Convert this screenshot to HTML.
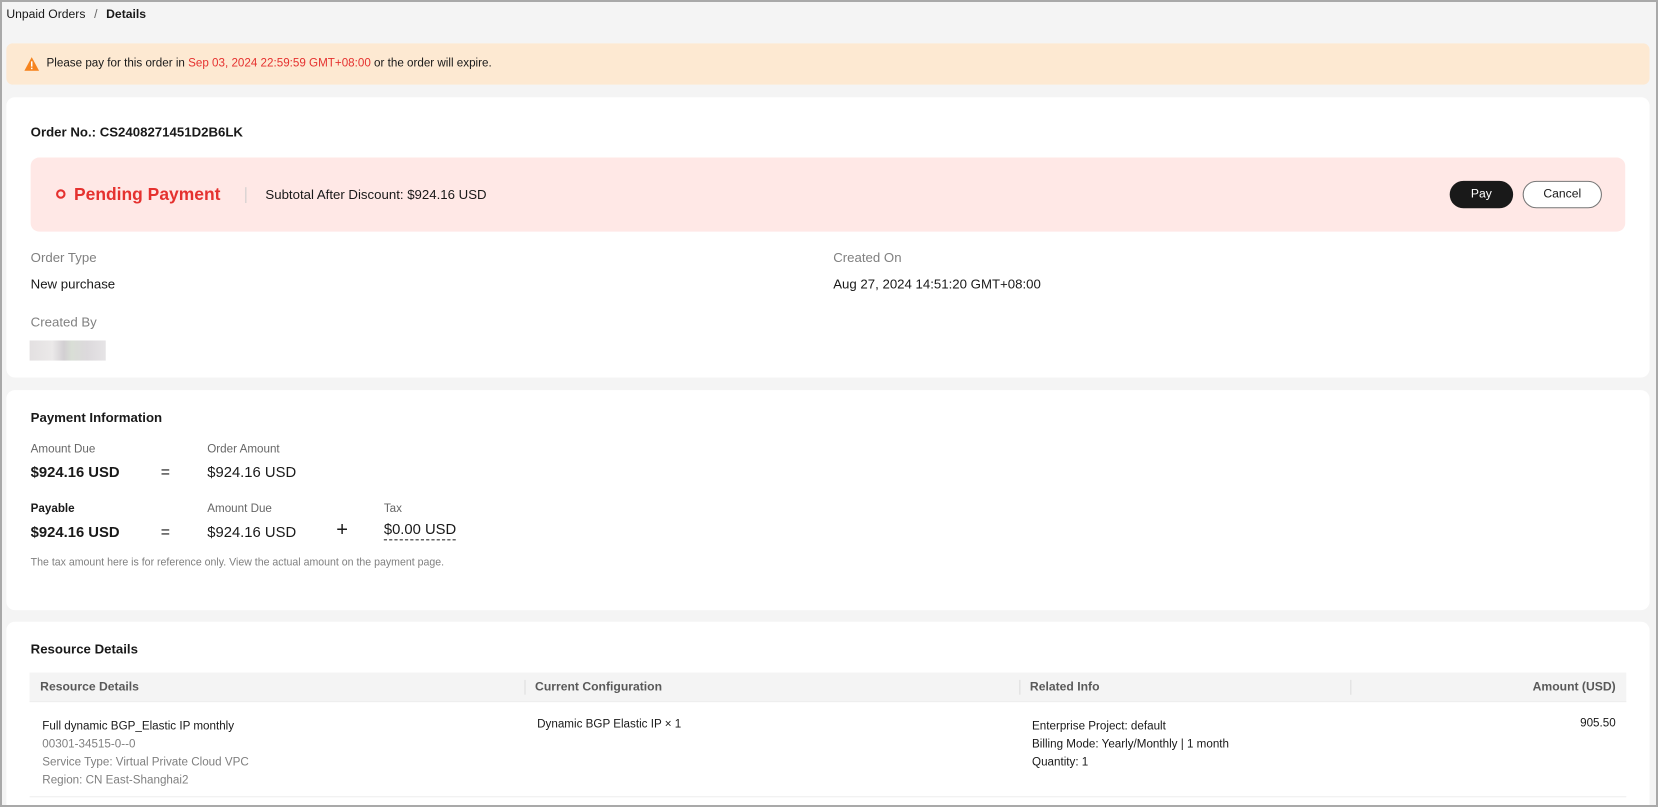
<!DOCTYPE html>
<html><head><meta charset="utf-8"><style>
*{margin:0;padding:0;box-sizing:border-box}
html,body{width:1658px;height:807px;overflow:hidden}
body{background:#f4f4f4;font-family:"Liberation Sans",Arial,sans-serif;color:#191919;position:relative}
#frame{position:absolute;left:0;top:0;width:1658px;height:807px;border:2px solid #a9a9a9;z-index:5;pointer-events:none}
#w{position:absolute;left:0;top:0;width:1568px;height:763px;overflow:hidden;transform:scale(1.0574);transform-origin:0 0}
.a{position:absolute;white-space:nowrap}
.card{position:absolute;left:6px;width:1554px;background:#fff;border-radius:8px}
.lbl{color:#808080}
.th{color:#595959;font-weight:bold;font-size:11.5px}
.g{color:#808080}
</style></head><body>
<div id="frame"></div>
<div id="w">
<div class="a" style="left:6px;top:8px;font-size:11.5px;color:#191919">Unpaid Orders <span style="color:#666;margin:0 5px">/</span> <b>Details</b></div>
<div class="a" style="left:6px;top:41px;width:1554px;height:39px;background:#fde9d2;border-radius:6px"></div>
<svg class="a" style="left:23px;top:54px" width="14" height="13" viewBox="0 0 14 13"><path d="M7 0L14 13H0Z" fill="#f6841f"/><rect x="6.3" y="4" width="1.4" height="5" fill="#fff"/><rect x="6.3" y="10" width="1.4" height="1.4" fill="#fff"/></svg>
<div class="a" style="left:44px;top:54px;font-size:11px">Please pay for this order in <span style="color:#e5312f">Sep 03, 2024 22:59:59 GMT+08:00</span> or the order will expire.</div>

<div class="card" style="top:92px;height:265px"></div>
<div class="a" style="left:29px;top:118px;font-size:12.5px;font-weight:bold">Order No.: CS2408271451D2B6LK</div>
<div class="a" style="left:29px;top:149px;width:1508px;height:70px;background:#ffe8e6;border-radius:8px"></div>
<div class="a" style="left:53px;top:179px;width:9px;height:9px;border:2px solid #e5312f;border-radius:50%"></div>
<div class="a" style="left:70px;top:175px;font-size:16.5px;font-weight:bold;color:#e5312f">Pending Payment</div>
<div class="a" style="left:232px;top:177px;width:1px;height:15px;background:#ccc"></div>
<div class="a" style="left:251px;top:177px;font-size:12.5px">Subtotal After Discount: $924.16 USD</div>
<div class="a" style="left:1371px;top:171px;width:60px;height:26px;background:#191919;border-radius:13px;color:#fff;font-size:11.5px;text-align:center;line-height:26px">Pay</div>
<div class="a" style="left:1440px;top:171px;width:75px;height:26px;background:#fff;border:1px solid #777;border-radius:13px;font-size:11.5px;text-align:center;line-height:24px">Cancel</div>
<div class="a lbl" style="left:29px;top:237px;font-size:12.5px">Order Type</div>
<div class="a" style="left:29px;top:262px;font-size:12.5px">New purchase</div>
<div class="a lbl" style="left:788px;top:237px;font-size:12.5px">Created On</div>
<div class="a" style="left:788px;top:262px;font-size:12.5px">Aug 27, 2024 14:51:20 GMT+08:00</div>
<div class="a lbl" style="left:29px;top:298px;font-size:12.5px">Created By</div>
<div class="a" style="left:28px;top:322px;width:72px;height:19px;background:linear-gradient(90deg,#e3e0e1,#ebe9e9 30%,#d2cfd2 45%,#d9ded6 55%,#dcd9dc 75%,#e6e4e6)"></div>

<div class="card" style="top:369px;height:208px"></div>
<div class="a" style="left:29px;top:388px;font-size:12.5px;font-weight:bold">Payment Information</div>
<div class="a" style="left:29px;top:419px;font-size:11px;color:#666">Amount Due</div>
<div class="a" style="left:29px;top:438px;font-size:14px;font-weight:bold">$924.16 USD</div>
<div class="a" style="left:152px;top:438px;font-size:15px">=</div>
<div class="a" style="left:196px;top:419px;font-size:11px;color:#666">Order Amount</div>
<div class="a" style="left:196px;top:438px;font-size:14px">$924.16 USD</div>
<div class="a" style="left:29px;top:475px;font-size:11px;font-weight:bold">Payable</div>
<div class="a" style="left:29px;top:495px;font-size:14px;font-weight:bold">$924.16 USD</div>
<div class="a" style="left:152px;top:495px;font-size:15px">=</div>
<div class="a" style="left:196px;top:475px;font-size:11px;color:#666">Amount Due</div>
<div class="a" style="left:196px;top:495px;font-size:14px">$924.16 USD</div>
<div class="a" style="left:318px;top:491px;font-size:19px">+</div>
<div class="a" style="left:363px;top:475px;font-size:11px;color:#666">Tax</div>
<div class="a" style="left:363px;top:492px;font-size:14px;border-bottom:1px dashed #333;padding-bottom:2px">$0.00 USD</div>
<div class="a" style="left:29px;top:527px;font-size:10px;color:#808080">The tax amount here is for reference only. View the actual amount on the payment page.</div>

<div class="card" style="top:588px;height:200px"></div>
<div class="a" style="left:29px;top:607px;font-size:12.5px;font-weight:bold">Resource Details</div>
<div class="a" style="left:28px;top:636px;width:1510px;height:28px;background:#f4f4f4;border-bottom:1px solid #eee"></div>
<div class="a th" style="left:38px;top:644px">Resource Details</div>
<div class="a" style="left:496px;top:643px;width:1px;height:14px;background:#ddd"></div>
<div class="a th" style="left:506px;top:644px">Current Configuration</div>
<div class="a" style="left:964px;top:643px;width:1px;height:14px;background:#ddd"></div>
<div class="a th" style="left:974px;top:644px">Related Info</div>
<div class="a" style="left:1277px;top:643px;width:1px;height:14px;background:#ddd"></div>
<div class="a th" style="left:1300px;top:644px;width:228px;text-align:right">Amount (USD)</div>
<div class="a" style="left:40px;top:679px;font-size:11px;line-height:17px">Full dynamic BGP_Elastic IP monthly<br><span class="g">00301-34515-0--0<br>Service Type: Virtual Private Cloud VPC<br>Region: CN East-Shanghai2</span></div>
<div class="a" style="left:508px;top:679px;font-size:11px">Dynamic BGP Elastic IP × 1</div>
<div class="a" style="left:976px;top:679px;font-size:11px;line-height:17px">Enterprise Project: default<br>Billing Mode: Yearly/Monthly | 1 month<br>Quantity: 1</div>
<div class="a" style="left:1300px;top:678px;width:228px;text-align:right;font-size:11px">905.50</div>
<div class="a" style="left:28px;top:753px;width:1510px;height:1px;background:#eee"></div>
</div>
</body></html>
